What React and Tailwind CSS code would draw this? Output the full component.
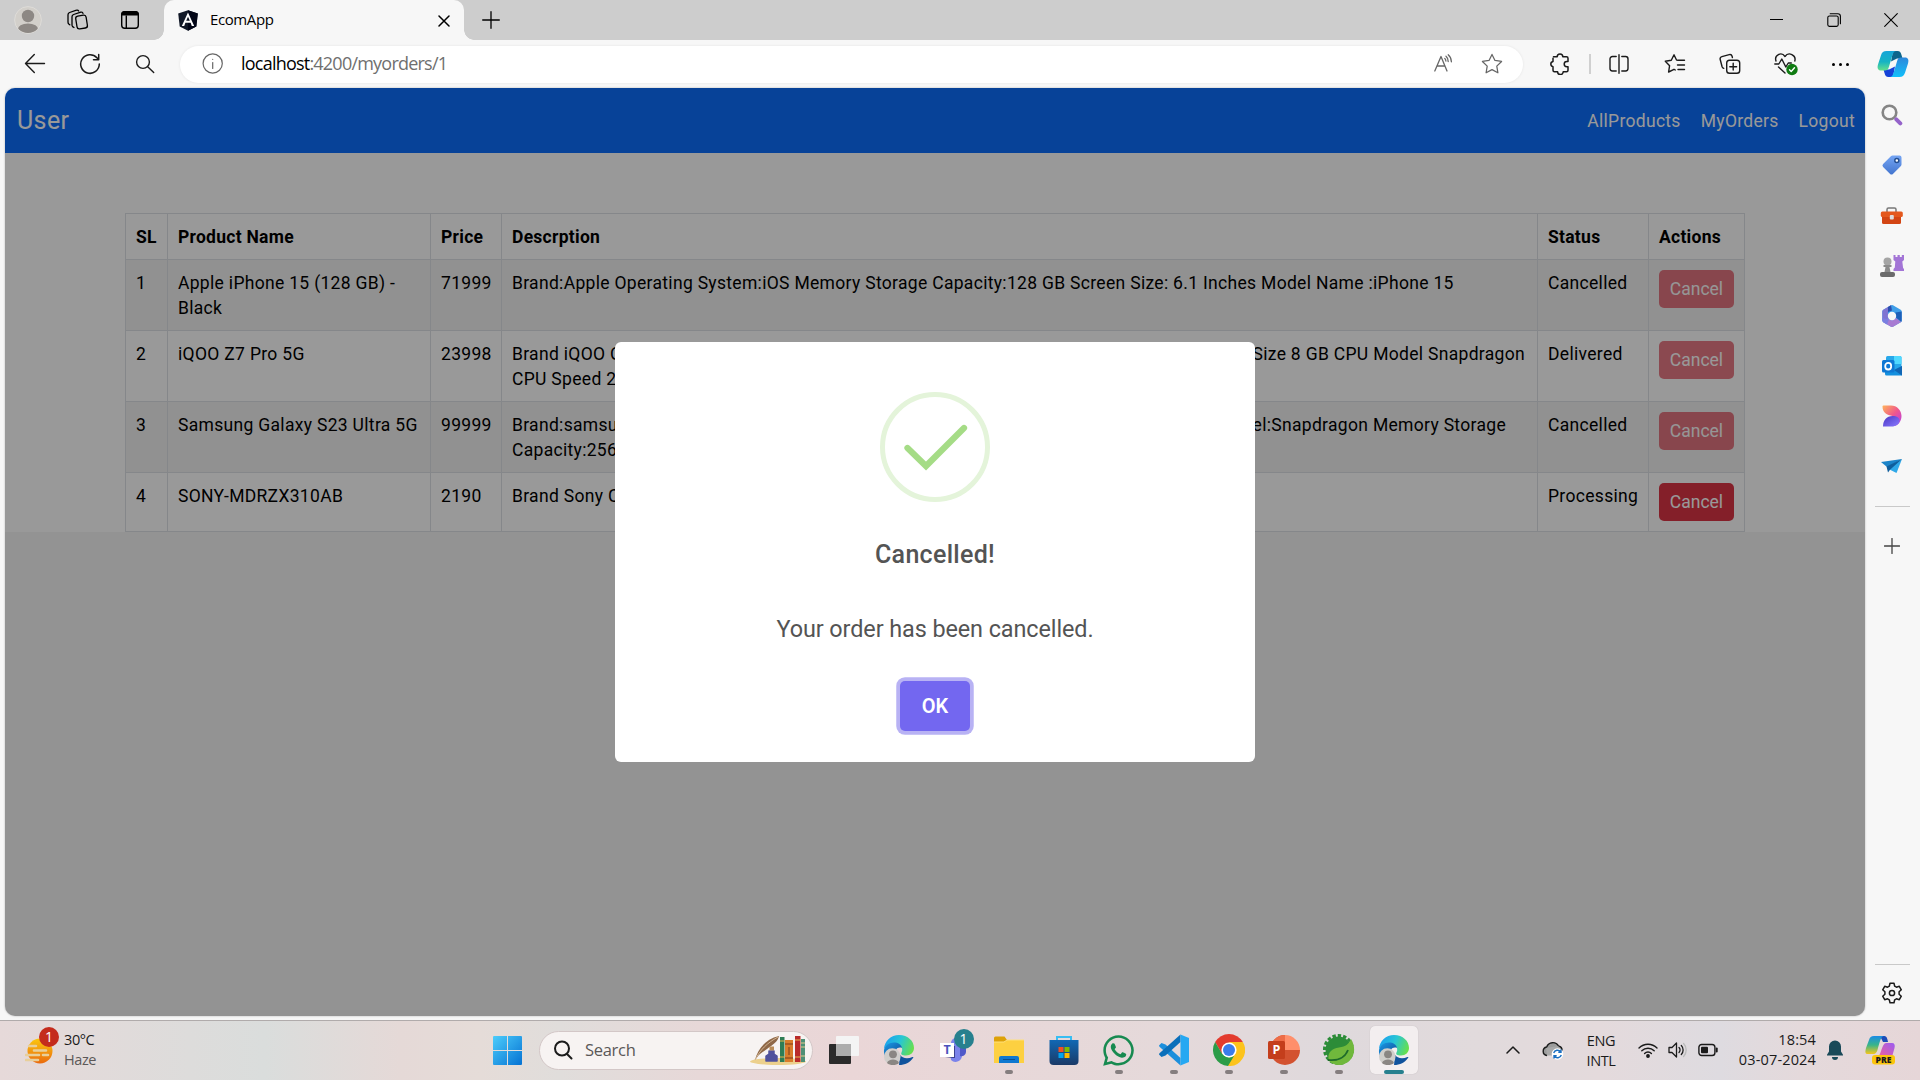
import { FaWhatsapp } from "react-icons/fa";

const UI = "font-['Open_Sans','Noto_Sans',sans-serif]";

function Icon({ s = 24, vb = "0 0 24 24", className = "", children, w = 1.3, ...rest }) {
  return (
    <svg width={s} height={s} viewBox={vb} className={"shrink-0 " + className} fill="none" stroke="currentColor" strokeWidth={w} strokeLinecap="round" strokeLinejoin="round" {...rest}>
      {children}
    </svg>
  );
}

function TabBar() {
  return (
    <div className="flex h-10 bg-[#cdcdcd] text-black">
      <div className="flex w-[164px] items-center">
        <div className="flex w-14 justify-center">
          <svg width="28" height="28" viewBox="0 0 28 28">
            <defs><clipPath id="av"><circle cx="14" cy="14" r="13" /></clipPath></defs>
            <circle cx="14" cy="14" r="13.4" fill="#d2cfca" stroke="#dedcd8" strokeWidth="1" />
            <g clipPath="url(#av)" fill="#8d8884"><circle cx="14" cy="10" r="6.2" /><ellipse cx="14" cy="24" rx="10.5" ry="6.6" /></g>
          </svg>
        </div>
        <div className="flex w-11 justify-center">
          <Icon s={24} w={1.3}>
            <rect x="10.3" y="7.6" width="10.5" height="13" rx="2.4" transform="rotate(-9 15 14)" />
            <path d="M8 19.5 6.6 18.6A2.5 2.5 0 0 1 6 16.600V8.800a2.500 2.500 0 0 1 1.600-2.300l7.200-2.400a1.800 1.800 0 0 1 2.200 1.300" />
            <path d="M3.800 16.800l-1-.8a2.500 2.500 0 0 1-.800-2V6.800a2.500 2.500 0 0 1 1.600-2.300L10.500 2.200a1.800 1.800 0 0 1 2.200.8" />
          </Icon>
        </div>
        <div className="flex w-[60px] justify-center">
          <Icon s={20} vb="0 0 20 20" w={1.4}>
            <rect x="1.700" y="1.700" width="16.600" height="16.600" rx="3" />
            <path d="M1.200 5.600V4.500A3.500 3.500 0 0 1 4.700 1h10.600a3.500 3.500 0 0 1 3.500 3.500v1.100z" fill="currentColor" stroke="none" />
            <path d="M6.300 6v12" />
          </Icon>
        </div>
      </div>
      <div className="relative flex w-[300px] items-center rounded-t-[10px] bg-[#f7f7f7] pl-[14px] pr-[12px]">
        <div className="absolute -left-[10px] bottom-0 size-[10px] bg-[radial-gradient(circle_at_0_0,#cdcdcd_9.500px,#f7f7f7_10px)]" />
        <div className="absolute -right-[10px] bottom-0 size-[10px] bg-[radial-gradient(circle_at_100%_0,#cdcdcd_9.500px,#f7f7f7_10px)]" />
        <svg width="20" height="21" viewBox="0 0 20 21">
          <path d="M10 .3 19.800 3.400 18.300 16.500 10 20.700 1.700 16.500 .2 3.400z" fill="#111827" />
          <path d="M10 .3 19.800 3.400 18.300 16.500 10 20.700z" fill="#020617" />
          <path fillRule="evenodd" d="M10 2.600 3.800 16h2.400l1.200-3.200h5.200L13.800 16h2.400zM10 6.700 11.800 10.800H8.200z" fill="#fff" />
        </svg>
        <span className={"mb-[2px] ml-[12px] text-[15px] leading-none tracking-[-0.4px] " + UI}>EcomApp</span>
        <Icon s={12} vb="0 0 12 12" w={1.500} className="ml-auto mr-[2px] mt-px"><path d="M1 1l10 10M11 1 1 11" /></Icon>
      </div>
      <div className="flex w-[53px] items-center justify-center pb-px"><Icon s={18} vb="0 0 18 18" w={1.300}><path d="M9 .7v16.600M.7 9h16.600" /></Icon></div>
      <div className="ml-auto flex items-center pb-px">
        <div className="flex w-[57px] justify-center"><div className="h-px w-[13px] bg-black" /></div>
        <div className="flex w-[57px] justify-center"><Icon s={14} vb="0 0 14 14" w={1.100}><rect x=".8" y="3" width="10.400" height="10.400" rx="1.600" /><path d="M3.200.7h7.600a2.600 2.600 0 0 1 2.600 2.600v7.400" /></Icon></div>
        <div className="flex w-[58px] justify-center"><Icon s={14} vb="0 0 14 14" w={1.100}><path d="M.7.7l12.600 12.600M13.300.7.7 13.300" /></Icon></div>
      </div>
    </div>
  );
}

function CopilotIcon() {
  return (
    <svg width="32" height="28" viewBox="0 0 32 28">
      <defs>
        <linearGradient id="cp1" x1="0" y1="0" x2="0" y2="1"><stop stopColor="#16a5d8" /><stop offset=".55" stopColor="#16b3c4" /><stop offset="1" stopColor="#63e08c" /></linearGradient>
        <linearGradient id="cp2" x1="0" y1="0" x2="0" y2="1"><stop stopColor="#2d87da" /><stop offset="1" stopColor="#11c0fb" /></linearGradient>
      </defs>
      <path d="M16 1h4.500c2.500 0 3.300 1.600 4 4l1 3.500h-5.500l-6 3z" fill="#0d668c" />
      <path d="M16 27h-4.500c-2.500 0-3.300-1.600-4-4l-1-3.500H12l6-3z" fill="#1542d8" />
      <path d="M9.500 1h10c-2.500 0-3.400 2-4.200 4.600l-3.500 11.600c-.7 2.300-1.600 3.300-4 3.300H4C.8 20.500 0 18 1 14.500L4 5.200C4.900 2.400 6.500 1 9.500 1z" fill="url(#cp1)" />
      <path d="M22.500 27h-10c2.500 0 3.400-2 4.200-4.600l3.500-11.600c.7-2.300 1.600-3.300 4-3.300H28c3.200 0 4 2.500 3 6l-3 9.300c-.9 2.800-2.500 4.200-5.500 4.200z" fill="url(#cp2)" />
    </svg>
  );
}

const star = "M10 1.300l2.700 5.500 6 .9-4.350 4.250 1 6L10 15.100l-5.350 2.850 1-6L1.300 7.700l6-.9z";

function Toolbar() {
  return (
    <div className="flex h-12 items-center bg-[#f7f7f7] text-[#1b1b1b]">
      <div className="flex w-[62px] justify-center pl-2"><Icon s={22} vb="0 0 22 22" w={1.400}><path d="M20.500 10.500H1.500M10.300 1.500 1.500 10.500l8.800 9" /></Icon></div>
      <div className="flex w-[56px] justify-center"><Icon s={22} vb="0 0 22 22" w={1.500}><path d="M20.300 11A9.300 9.300 0 1 1 17.900 4.800L19.500 6.500M19.700 1.500v5.200h-5.200" /></Icon></div>
      <div className="flex w-[54px] justify-center"><Icon s={20} vb="0 0 20 20" w={1.400}><circle cx="8" cy="8" r="6.400" /><path d="M12.700 12.700l6 5.800" /></Icon></div>
      <div className="ml-2 flex h-[37px] w-[1343px] items-center rounded-full bg-white shadow-[0_0_3px_rgba(0,0,0,0.08)]">
        <Icon s={22} vb="0 0 22 22" w={1.200} className="ml-[22px] text-[#666]"><circle cx="10.700" cy="10.500" r="9.600" /><path d="M10.700 9.500v6" /><circle cx="10.700" cy="6.300" r=".6" fill="currentColor" stroke="none" /></Icon>
        <span className={"mb-[2px] ml-[17px] text-[18px] leading-none tracking-[-0.78px] text-[#6f6f6f] " + UI}><span className="text-black">localhost</span>:4200/myorders/1</span>
        <div className="ml-auto flex items-center pr-[20px] text-[#666]">
          <Icon s={22} vb="0 0 22 22" w={1.300}><path d="M1.800 18 8 3.500 14 18M3.900 13h8.100M13 3.200c1.500 1.200 2.200 3 2.200 5.300M15.200 1.800c2.200 1.800 3.100 4 3.200 7M11.800 5.500c.8.600 1 1.500 1.100 2.500" /></Icon>
          <Icon s={22} vb="0 0 20 20" w={1.150} className="ml-[26px]"><path d={star} /></Icon>
        </div>
      </div>
      <div className="flex w-[66px] items-center justify-center pl-2"><Icon s={22} vb="0 0 22 22" w={1.500}><path d="M4.500 3.700h3.700a2.800 2.800 0 0 1 5.600 0h3.700a1.500 1.500 0 0 1 1.500 1.500v3.300h-1.200a2.600 2.600 0 0 0 0 5.200H19v3.600a1.500 1.500 0 0 1-1.500 1.500h-3.300a2.800 2.800 0 0 1-5.600 0H5.500A1.500 1.500 0 0 1 4 17.300v-3.600a2.700 2.700 0 0 1 0-5.300V5.200" /></Icon></div>
      <div className="h-5 w-[2px] bg-[#d0d0d0]" />
      <div className="flex w-[56px] justify-center"><Icon s={20} vb="0 0 20 20" w={1.400}><path d="M10 .7v18.600M7.200 2.500H3.400A2.400 2.400 0 0 0 1 4.900v9.700A2.400 2.400 0 0 0 3.400 17h3.800M12.800 2.500h3.800A2.400 2.400 0 0 1 19 4.900v9.700a2.400 2.400 0 0 1-2.400 2.400h-3.800" /></Icon></div>
      <div className="flex w-[56px] justify-center"><Icon s={22} vb="0 0 22 22" w={1.400}><path d="M12.500 7 10 1.800 7.300 7.200 1.300 8.200l4.300 4.500-1 6.300L10 16.300l1.300.7M13.500 7.300h7M13.500 12h7M14 16.500h6.500" /></Icon></div>
      <div className="flex w-[54px] justify-center"><Icon s={22} vb="0 0 22 22" w={1.400}><rect x="7.700" y="7.200" width="13" height="13" rx="2.800" /><path d="M14.200 10.300v6.800M10.800 13.700h6.800M4.700 15.300a2.400 2.400 0 0 1-1.600-1.600L1.200 6.500a2.400 2.400 0 0 1 1.700-2.900l7.300-2a2.400 2.400 0 0 1 2.900 1.700l.3 1.200" /></Icon></div>
      <div className="flex w-[57px] justify-center">
        <Icon s={26} vb="0 0 26 26" w={1.400}>
          <path d="M3 10c-2-6 5.500-9.700 9-4.500C15.500.3 23.500 4 21.800 10M1.800 13h4l3-5 4 8 2.500-4h3M5.500 16l6.500 6" />
          <circle cx="19" cy="18.500" r="5.700" fill="#0f7b12" stroke="none" /><path d="M16.500 18.800l1.700 1.700 3.300-3.700" stroke="#fff" />
        </Icon>
      </div>
      <div className="flex w-[52px] justify-center gap-[4px]"><i className="size-[3px] rounded-full bg-black" /><i className="size-[3px] rounded-full bg-black" /><i className="size-[3px] rounded-full bg-black" /></div>
      <div className="flex w-[54px] justify-center"><CopilotIcon /></div>
    </div>
  );
}

const rows = [
  { sl: 1, name: "Apple iPhone 15 (128 GB) - Black", price: 71999, lines: [["Brand:Apple Operating System:iOS Memory Storage Capacity:128 GB Screen Size: 6.1 Inches Model Name :iPhone 15"]], status: "Cancelled" },
  { sl: 2, name: "iQOO Z7 Pro 5G", price: 23998, lines: [["Brand iQOO Operating", "Size 8 GB CPU Model Snapdragon", "pr-[2px]"], ["CPU Speed 2"]], status: "Delivered" },
  { sl: 3, name: "Samsung Galaxy S23 Ultra 5G", price: 99999, lines: [["Brand:samsung", "Model:Snapdragon Memory Storage", "pr-[21px]"], ["Capacity:256"]], status: "Cancelled" },
  { sl: 4, name: "SONY-MDRZX310AB", price: 2190, lines: [["Brand Sony Color"]], status: "Processing" },
];

const cell = "border border-[#dee2e6] px-[10px] pt-[11px] pb-[9px] text-left align-top";

function Orders() {
  return (
    <div className="h-[379px] bg-white pt-[60px] pl-[120px]">
      <table className="w-[1620px] table-fixed border-collapse text-[17.500px] leading-[25px] tracking-[0.3125px] text-black">
        <colgroup>
          <col className="w-[42px]" /><col className="w-[263px]" /><col className="w-[71px]" /><col className="w-[1036px]" /><col className="w-[111px]" /><col className="w-[96px]" />
        </colgroup>
        <thead>
          <tr className="h-[46px]">
            {["SL", "Product Name", "Price", "Descrption", "Status", "Actions"].map((h) => (
              <th key={h} className={cell + " font-bold tracking-[0.27px] whitespace-nowrap"}>{h}</th>
            ))}
          </tr>
        </thead>
        <tbody>
          {rows.map((r) => (
            <tr key={r.sl} className="odd:bg-[#f2f2f2]">
              <td className={cell}>{r.sl}</td>
              <td className={cell}>{r.name}</td>
              <td className={cell}>{r.price}</td>
              <td className={cell}>
                {r.lines.map(([a, b, pad], i) => (
                  <div key={i} className={"flex justify-between whitespace-nowrap " + (pad || "")}><span>{a}</span>{b && <span>{b}</span>}</div>
                ))}
              </td>
              <td className={cell}>{r.status}</td>
              <td className="border border-[#dee2e6] p-[10px] align-top">
                <button className={"block h-[38px] w-[75px] rounded-[5px] bg-[#dc3545] text-[17.500px] leading-[26px] tracking-normal text-white " + (r.status === "Processing" ? "" : "opacity-65")}>Cancel</button>
              </td>
            </tr>
          ))}
        </tbody>
      </table>
    </div>
  );
}

function Modal() {
  return (
    <div className="absolute inset-0 flex items-center justify-center bg-black/40">
      <div className="flex h-[420px] w-[640px] flex-col items-center rounded-[6px] bg-white pt-[50px] text-[#545454]">
        <svg width="110" height="110" viewBox="0 0 110 110" className="shrink-0" fill="none">
          <circle cx="55" cy="55" r="52.500" stroke="#e4f4da" strokeWidth="5" />
          <path d="M27.500 56 46 74 84 36" stroke="#a5dc86" strokeWidth="6.250" strokeLinecap="round" />
        </svg>
        <h2 className="mt-[33px] text-[25px] leading-[40px] font-medium tracking-[0.3px]">Cancelled!</h2>
        <p className="mt-[37px] text-[23.400px] leading-[34px] tracking-[-0.080px]">Your order has been cancelled.</p>
        <button className="mt-[35px] h-[50px] w-[70px] shrink-0 rounded-[5px] bg-[#7367f0] text-[20px] font-semibold text-white shadow-[0_0_0_3.750px_#b8b2f4]">OK</button>
      </div>
    </div>
  );
}

function Sidebar() {
  const c = "flex h-[50.200px] items-center justify-center";
  return (
    <div className="flex w-[55px] flex-col items-stretch pt-[2px] pr-px text-[#1b1b1b]">
      <div className={c}>
        <svg width="22" height="22" viewBox="0 0 22 22" fill="none"><circle cx="8.500" cy="8.500" r="6.800" stroke="#858585" strokeWidth="2.600" /><path d="M15.300 15.300l4 4" stroke="#9563ca" strokeWidth="4" strokeLinecap="round" /></svg>
      </div>
      <div className={c}>
        <svg width="22" height="22" viewBox="0 0 22 22"><defs><linearGradient id="tg" x1="0" y1="0" x2="0" y2="1"><stop stopColor="#75a5f3" /><stop offset="1" stopColor="#4375cf" /></linearGradient></defs><path d="M11.500 1.500h7A2 2 0 0 1 20.500 3.500v7a2 2 0 0 1-.6 1.400l-8 8a2 2 0 0 1-2.800 0l-7-7a2 2 0 0 1 0-2.800l8-8a2 2 0 0 1 1.400-.6z" fill="url(#tg)" /><circle cx="15.800" cy="6.500" r="2" fill="#fff" stroke="#234e91" strokeWidth="1.500" /></svg>
      </div>
      <div className={c + " pt-[2px]"}>
        <svg width="24" height="22" viewBox="0 0 24 22"><path d="M7 7V4.500A1.500 1.500 0 0 1 8.500 3h6A1.500 1.500 0 0 1 16 4.500V7" fill="none" stroke="#777" strokeWidth="1.500" /><rect x="2" y="10" width="19" height="9" rx="1.500" fill="#d34513" /><rect x=".8" y="6.500" width="22" height="5.500" rx="1.500" fill="#e4581d" /><rect x="9.800" y="10" width="4" height="4.500" rx="1" fill="#ddd" /></svg>
      </div>
      <div className={c}>
        <svg width="24" height="24" viewBox="0 0 24 24"><path d="M13.500 1h2v2h2V1h2.300v2h2V1H24v5l-1.700 1.500.8 6.500.9 1v2H13.500v-2l1.300-1.500.5-6L13.500 6z" fill="#a375d6" /><circle cx="7.500" cy="7.500" r="4" fill="#a5a5a5" /><path d="M3.500 11h8v2h-2l1 5h-6l1-5h-2z" fill="#8b8b8b" /><rect x="0" y="18" width="15" height="5" rx="2" fill="#6b6b6b" /></svg>
      </div>
      <div className={c}>
        <svg width="22" height="24" viewBox="0 0 22 24">
          <path d="M10 1.200a2 2 0 0 1 2 0l7.700 4.500a2 2 0 0 1 1 1.700v9.200a2 2 0 0 1-1 1.700L12 22.800a2 2 0 0 1-2 0l-7.700-4.500a2 2 0 0 1-1-1.700V7.400a2 2 0 0 1 1-1.700z" fill="#3f9ee8" />
          <path d="M10 1.200 2.300 5.700a2 2 0 0 0-1 1.700v9.200l5.700-1V8z" fill="#7f74d2" /><path d="M10 1.200 7 3v5l4-1.500z" fill="#2b4fae" />
          <path d="M20.700 7.400v9.200a2 2 0 0 1-.5 1.300L14.500 13V8.500z" fill="#1d5fb8" />
          <path d="M20.200 17.900 12 22.800a2 2 0 0 1-2 0L2 18l5-3.500 4 2 4-2.500z" fill="#a87bd2" /><path d="M1.300 14v2.600a2 2 0 0 0 1 1.700L6 20.500l2-5z" fill="#7a7fe0" />
          <circle cx="11" cy="12" r="4.200" fill="#f7f7f7" />
        </svg>
      </div>
      <div className={c}>
        <svg width="22" height="22" viewBox="0 0 22 22"><rect x="5" y="1" width="15.500" height="15" rx="1.500" fill="#28a8ea" /><path d="M13 1h6a1.500 1.500 0 0 1 1.500 1.500V9H13z" fill="#50d9ff" /><path d="M4 12l9 3 8-4v9.500H5.500A1.500 1.500 0 0 1 4 19z" fill="#1490df" /><path d="M21 11v9.500L13 15z" fill="#1066b5" /><rect x="1" y="5" width="12.500" height="12.500" rx="1.500" fill="#0f78d4" /><ellipse cx="7.200" cy="11.200" rx="3" ry="3.300" fill="none" stroke="#fff" strokeWidth="1.800" /></svg>
      </div>
      <div className={c}>
        <svg width="22" height="24" viewBox="0 0 22 24"><defs><linearGradient id="ds1" x1="0" y1="0" x2="1" y2="1"><stop stopColor="#ffb35a" /><stop offset=".5" stopColor="#f0588b" /><stop offset="1" stopColor="#b339ef" /></linearGradient><linearGradient id="ds2" x1="0" y1="0" x2="1" y2="1"><stop stopColor="#4a36c4" /><stop offset="1" stopColor="#8a7bff" /></linearGradient></defs><path d="M2.500 1.500h7.500c6 0 10.500 5 10.500 10.500 0 5-3 9-7 10C16 18 15 13 11.500 12 6 11 1.500 9 1.500 2.500a1 1 0 0 1 1-1z" fill="url(#ds1)" /><path d="M2 22.500c0-6 3.500-10.500 9.500-10.500 4.500 0 7 2 7 4.500 0 3.500-3.500 6-8 6z" fill="url(#ds2)" /></svg>
      </div>
      <div className={c}>
        <svg width="24" height="22" viewBox="0 0 24 22"><path d="M1 7 22 4l-9.500 5.500L7 12z" fill="#1c84c9" /><path d="M22 4 7.500 13.500 16.500 18z" fill="#2fa8e8" /><path d="M22 4 6.500 11.500 8 17.500l2-2.800z" fill="#0f5e9c" /></svg>
      </div>
      <div className="mx-auto mt-[14px] h-px w-[35px] bg-[#c9c9c9]" />
      <div className="mt-[14px] flex h-[50px] items-center justify-center"><Icon s={16} vb="0 0 16 16" w={1.300} className="text-[#444]"><path d="M8 .5v15M.5 8h15" /></Icon></div>
      <div className="mx-auto mt-auto h-px w-[35px] bg-[#c9c9c9]" />
      <div className="flex h-[51px] items-center justify-center pt-[4px]">
        <Icon s={22} vb="0 0 22 22" w={1.500}><path d="M9 1.300h4l.7 2.900 1.700 1 2.900-.9 2 3.500-2.200 2v2.400l2.200 2-2 3.500-2.900-.9-1.700 1-.7 2.900H9l-.7-2.900-1.700-1-2.900.9-2-3.500 2.200-2V9.800l-2.200-2 2-3.500 2.900.9 1.700-1z" /><circle cx="11" cy="11" r="2.600" /></Icon>
      </div>
    </div>
  );
}

function EdgeLogo({ id }) {
  return (
    <svg width="32" height="32" viewBox="0 0 32 32">
      <defs>
        <linearGradient id={id + "a"} x1="0" y1=".3" x2="1" y2=".6"><stop stopColor="#1a9ff0" /><stop offset=".5" stopColor="#28c6d4" /><stop offset="1" stopColor="#68e04a" /></linearGradient>
        <linearGradient id={id + "b"} x1="0" y1="0" x2="1" y2="1"><stop stopColor="#1b9be8" /><stop offset="1" stopColor="#0d4a93" /></linearGradient>
      </defs>
      <path d="M1 15C1.500 7 8 1 16 1c9 0 15 6 15 13 0 4.500-3.500 7.500-8 7.500-4 0-5.500-1.300-4.500-3 1.500-3 .5-5-1-6.500-5-4.500-13-2.500-16.500 3z" fill={"url(#" + id + "a)"} />
      <path d="M1 16C2 11.500 6 8.500 11 8.500c4 0 7.500 2 8 5.500-2-1-5-.5-6 2l-2 4-9 2C1.200 20 .8 18 1 16z" fill={"url(#" + id + "b)"} />
      <path d="M17 21c2 3 7 4.500 12.500 2 1-.4 1 .3.500 1-3 4.500-8 7-14 7z" fill="#10539d" />
      <circle cx="9.300" cy="22.500" r="8.300" fill="#d0cecb" /><circle cx="10" cy="20.300" r="3.900" fill="#8a8683" /><path d="M4 29c1-4.800 11-4.800 12 0-3 2.700-9 2.700-12 0z" fill="#8a8683" />
    </svg>
  );
}

const tasks = [
  { run: "", icon: <svg width="32" height="30" viewBox="0 0 32 30"><rect x="1" y="9" width="22" height="20" rx="1" fill="#2b2b2b" /><rect x="8" y="1" width="23" height="20" rx="1" fill="#f4f4f4" /><path d="M8 9h15v12H9a1 1 0 0 1-1-1z" fill="#adadad" /></svg> },
  { run: "", icon: <EdgeLogo id="e1" /> },
  { run: "", icon: (
    <div className="relative">
      <svg width="34" height="32" viewBox="0 0 34 32"><circle cx="19" cy="9" r="5" fill="#7b83eb" /><path d="M12 11h13v10a6.500 6.500 0 0 1-11 5z" fill="#7b83eb" /><path d="M23 12h6v6a4.500 4.500 0 0 1-6 4z" fill="#5059c9" /><path d="M16 12h2v12H8l8-1z" fill="#3c4291" /><rect x="3" y="9" width="14" height="14" fill="#fff" /><text x="10" y="20.300" textAnchor="middle" fontFamily="Open Sans" fontWeight="700" fontSize="12.500" fill="#4b53bc">T</text></svg>
      <span className="absolute -top-[5px] left-[17px] flex size-5 items-center justify-center rounded-full bg-[#27808e] font-['Open_Sans',sans-serif] text-[14px] leading-none text-white">1</span>
    </div>) },
  { run: "dot", icon: <svg width="32" height="30" viewBox="0 0 32 30"><path d="M1 3a1.500 1.500 0 0 1 1.500-1.500h9L14 5h17v6H1z" fill="#dda108" /><path d="M1 7h10l3-2h17v23H1z" fill="#fdd041" /><path d="M1 7h10l3-2h17" stroke="#ffe07a" fill="none" /><path d="M6 28v-5a2 2 0 0 1 2-2h16a2 2 0 0 1 2 2v5z" fill="#0f78d0" /><path d="M10 24.500h12" stroke="#0a4f91" /></svg> },
  { run: "", icon: <svg width="32" height="32" viewBox="0 0 32 32"><defs><linearGradient id="st" x1="0" y1="0" x2="0" y2="1"><stop stopColor="#1168b4" /><stop offset="1" stopColor="#1a3a67" /></linearGradient></defs><path d="M9 7V3h14v4" fill="none" stroke="#38bdf2" strokeWidth="2" /><path d="M1.500 6h29v21a4 4 0 0 1-4 4h-21a4 4 0 0 1-4-4z" fill="url(#st)" /><path d="M10.500 13h5v5h-5z" fill="#f25022" /><path d="M16.500 13h5v5h-5z" fill="#7fba00" /><path d="M10.500 19h5v5h-5z" fill="#00a4ef" /><path d="M16.500 19h5v5h-5z" fill="#ffb900" /></svg> },
  { run: "dot", icon: <FaWhatsapp size={35} color="#178a50" /> },
  { run: "dot", icon: <svg width="32" height="32" viewBox="0 0 32 32"><path d="M1 11.500 3.500 9l4 1.500L22.500 24v7.500L1.500 12.800z" fill="#1c8fdc" /><path d="M1 20.500 3.500 23l4-1.500L22.500 8V.5L1.500 19.200z" fill="#0a6fba" /><path d="M22.500.5 31 4v24l-8.500 3.500z" fill="#26a8f2" /></svg> },
  { run: "dot", icon: <svg width="32" height="32" viewBox="0 0 32 32"><path d="M16 16 2.150 8A16 16 0 0 1 29.850 8z" fill="#e33b2e" /><path d="M16 16 29.850 8A16 16 0 0 1 15 32z" fill="#fcc31c" /><path d="M16 8h13.850L22 20z" fill="#fcc31c" /><path d="M2.150 8 9 20l7-12z" fill="#e33b2e" /><path d="M2.150 8 9.200 20 16 23.500 21 22 15 32A16 16 0 0 1 2.150 8z" fill="#2b9c48" /><circle cx="16" cy="16" r="7.600" fill="#fff" /><circle cx="16" cy="16" r="6" fill="#3a7cec" /></svg> },
  { run: "dot", icon: <svg width="32" height="30" viewBox="0 0 32 30"><path d="M17 0a15 15 0 0 1 15 15H17z" fill="#ff8f6b" /><path d="M17 0v15h15a15 15 0 1 1-15-15z" fill="#d35230" /><path d="M17 0v15H2A15 15 0 0 1 17 0z" fill="#ed6c47" /><rect x="0" y="6" width="17" height="18" rx="1.500" fill="#c43e1c" /><text x="8.500" y="19.300" textAnchor="middle" fontFamily="Open Sans" fontWeight="700" fontSize="12.500" fill="#fff">P</text></svg> },
  { run: "dot", icon: <svg width="32" height="32" viewBox="0 0 32 32"><circle cx="15.500" cy="15.500" r="13" fill="#2c8c38" /><circle cx="15.500" cy="15.500" r="14" fill="none" stroke="#2c8c38" strokeWidth="3" strokeDasharray="3.400 2" /><path d="M28 5c5 8 4 18-3 23-6 4.500-14 4-19-1-2-7 1-12 10-13.500 7-1 10-3.500 12-8.500z" fill="#70b83c" /><path d="M5 26c9 1 17-2 20-10" stroke="#1e6b2a" strokeWidth="1.800" fill="none" /></svg> },
  { run: "active", icon: <EdgeLogo id="e2" /> },
];

function SearchArt() {
  return (
    <svg width="58" height="32" viewBox="0 0 58 32">
      <ellipse cx="29" cy="27.500" rx="28" ry="3.500" fill="#ecd08c" />
      <path d="M6 26C9 14 17 5 30 2c-1 6-7 9-12 13-3 2-7 5-9 7z" fill="#8f6848" /><path d="M6 26C11 16 18 9 29 3" stroke="#d2b492" fill="none" />
      <path d="M20 17h5v3l3 2v5h-11v-5l3-2z" fill="#50519c" stroke="#50519c" strokeWidth="1.500" strokeLinejoin="round" /><path d="M20.500 12.500h4.500v4h-4.500z" fill="#b98b57" />
      <path d="M31 3h4.500v25H31z" fill="#2e7d55" /><path d="M31 7h4.500M31 23h4.500" stroke="#e2b34c" /><path d="M36 6h8v22h-8z" fill="#d97c2b" /><path d="M36 10h8M36 24h8M40 13v8" stroke="#7c3a18" /><path d="M46 2h5.500v26H46z" fill="#b92a2a" /><path d="M46 6h5.500M46 23h5.500" stroke="#e7b44f" /><path d="M52 5h4v23h-4z" fill="#4e8f76" /><path d="M52 9h4M52 13h4M52 22h4" stroke="#e2c98a" />
    </svg>
  );
}

function Taskbar() {
  return (
    <div className={"flex h-[60px] items-center border-t border-[#b0abab] bg-[linear-gradient(90deg,#e6d9d9_0px,#dddcdb_190px,#dadddc_265px,#e5d9d7_400px,#e5dcd8_480px,#e0dddb_560px,#e7d8d8_700px,#ead6d7_850px,#e5d9da_1160px,#dfd9dc_1330px,#e1dadc_1480px,#e4dadc_1600px,#dedbe0_1720px,#e4d9db_1800px,#e6d6d8_1920px)] pb-px text-[#1b1b1b] " + UI}>
      <div className="flex w-[480px] items-center pl-[25px]">
        <div className="relative">
          <svg width="30" height="36" viewBox="0 0 30 36"><defs><linearGradient id="sun" x1="0" y1="0" x2="0" y2="1"><stop stopColor="#fbc70f" /><stop offset="1" stopColor="#ea6a0e" /></linearGradient></defs><circle cx="15" cy="19" r="12.500" fill="url(#sun)" /><path d="M4 14h7M9 18.500h12M1 23h13M18 23h5M1 28h12" stroke="#e8cf9a" strokeWidth="2.600" strokeLinecap="round" /></svg>
          <span className="absolute -top-[5px] left-[14px] flex size-5 items-center justify-center rounded-full bg-[#c42b1c] text-[14px] leading-none text-white">1</span>
        </div>
        <div className="ml-[9px] text-[14.500px] leading-[20px] tracking-[-0.4px]"><div>30°C</div><div className="text-[#5c5858]">Haze</div></div>
      </div>
      <div className="flex w-[55px] justify-center">
        <svg width="29" height="29" viewBox="0 0 29 29"><defs><linearGradient id="wn" gradientUnits="userSpaceOnUse" x1="0" y1="0" x2="29" y2="29"><stop stopColor="#4ccdfb" /><stop offset="1" stopColor="#0572d3" /></linearGradient></defs><path d="M0 1a1 1 0 0 1 1-1h13v14H0zM15 0h13a1 1 0 0 1 1 1v13H15zM0 15h14v14H1a1 1 0 0 1-1-1zM15 15h14v13a1 1 0 0 1-1 1H15z" fill="url(#wn)" /></svg>
      </div>
      <div className="ml-[4px] flex h-[39px] w-[274px] items-center rounded-full border border-[#d3c7c7] bg-[#f7f3f2] pr-[5px] pl-[13px]">
        <Icon s={20} vb="0 0 20 20" w={2}><circle cx="9" cy="8.500" r="7" /><path d="M14 14l4.500 4.500" /></Icon>
        <span className="ml-[12px] text-[16.500px] leading-none tracking-[-0.3px] text-[#5b5858]">Search</span>
        <span className="ml-auto"><SearchArt /></span>
      </div>
      <div className="ml-[3px] flex">
        {tasks.map((t, i) => (
          <div key={i} className="flex w-[55px] justify-center">
            <div className={"relative flex size-12 items-center justify-center rounded-[5px] " + (t.run === "active" ? "bg-[#f3eeef] shadow-[0_0_1px_rgba(0,0,0,0.2)]" : "")}>
              {t.icon}
              {t.run === "dot" && <span className="absolute bottom-0 h-1 w-2 rounded-full bg-[#857e7f]" />}
              {t.run === "active" && <span className="absolute bottom-0 h-1 w-5 rounded-full bg-[#27808e]" />}
            </div>
          </div>
        ))}
      </div>
      <div className="ml-auto flex items-center">
        <div className="flex w-[36px] justify-center"><Icon s={14} vb="0 0 14 8" w={1.500}><path d="M1 7l6-6 6 6" /></Icon></div>
        <div className="flex w-[44px] justify-center">
          <svg width="22" height="20" viewBox="0 0 22 20"><path d="M5 15.500a4.300 4.300 0 0 1-.3-8.500A6.500 6.500 0 0 1 16.500 6a4.300 4.300 0 0 1 3.500 4.500" fill="#9b9b9b" stroke="#1b1b1b" strokeWidth="1.400" /><path d="M5 15.500h7l8-5L16 6 4 8z" fill="#a9a9a9" /><circle cx="15.500" cy="14" r="5.800" fill="#fff" /><path d="M11.700 13a4 4 0 0 1 7-1.200M19.300 15a4 4 0 0 1-7 1.200M19 9.500v2.700h-2.700M12 18.500v-2.700h2.700" stroke="#1a6fc2" strokeWidth="1.400" fill="none" /></svg>
        </div>
        <div className="w-[52px] pt-px text-center text-[14.500px] leading-[20px] tracking-[-0.4px]">ENG<br />INTL</div>
        <div className="flex w-[40px] justify-center pl-px"><Icon s={20} vb="0 0 20 16" w={1.400}><path d="M1 6a12.700 12.700 0 0 1 18 0M3.800 8.800a8.800 8.800 0 0 1 12.400 0M6.600 11.400a4.800 4.800 0 0 1 6.800 0" /><circle cx="10" cy="14" r="1.200" fill="currentColor" /></Icon></div>
        <div className="flex w-[22px] justify-center"><Icon s={20} vb="0 0 20 20" w={1.300}><path d="M1 7.500h3L8.500 3v14L4 12.500H1zM11 7.500a3.500 3.500 0 0 1 0 5M13.300 5.500a6.500 6.500 0 0 1 0 9" /><path d="M15.600 3.500a9.500 9.500 0 0 1 0 13" stroke="#bbb" /></Icon></div>
        <div className="flex w-[36px] justify-center pl-px"><Icon s={20} vb="0 0 20 14" w={1.400}><rect x=".9" y="1.500" width="16" height="11" rx="2.800" /><rect x="3" y="3.700" width="7" height="6.600" rx="1" fill="currentColor" stroke="none" /><path d="M18.700 5.500v3" strokeWidth="2" /></Icon></div>
        <div className="w-[91px] text-right text-[14.500px] leading-[20px] tracking-[0.15px]">18:54<br />03-07-2024</div>
        <div className="flex w-[38px] justify-center"><svg width="16" height="20" viewBox="0 0 16 20"><path d="M8 .5a6 6 0 0 1 6 6v5l2 3.300v.7H0v-.7l2-3.300v-5a6 6 0 0 1 6-6z" fill="#1a4a59" /><path d="M5 17h6a3 3 0 0 1-6 0z" fill="#1a4a59" /></svg></div>
        <div className="flex w-[66px] justify-center pr-[12px]">
          <svg width="32" height="30" viewBox="0 0 32 30" className="shrink-0">
            <defs><linearGradient id="pr1" x1="0" y1="0" x2="0" y2="1"><stop stopColor="#1a8be5" /><stop offset=".5" stopColor="#38b58a" /><stop offset="1" stopColor="#f6c61c" /></linearGradient><linearGradient id="pr2" x1="1" y1="0" x2="0" y2="1"><stop stopColor="#9a5cf2" /><stop offset="1" stopColor="#f0609a" /></linearGradient></defs>
            <path d="M15 1h4.500c2 0 2.800 2 3.500 6h-5z" fill="#1b4cb8" /><path d="M9 1h10c-3 0-4 5-6 12-1 4-2 6-5 6H3c-3 0-3-2-2-6l3-8c1-3 2-4 5-4z" fill="url(#pr1)" /><path d="M13 22c3-2 4-14 8-14h6c2.500 0 3.300 2 2.500 5L27 22z" fill="url(#pr2)" />
            <rect x="7" y="20" width="23" height="9.500" rx="3" fill="#fbc50c" /><text x="18.500" y="27.700" textAnchor="middle" fontSize="8.500" fontWeight="800" fontFamily="Open Sans" fill="#1b1b1b">PRE</text>
          </svg>
        </div>
      </div>
    </div>
  );
}

export default function App() {
  return (
    <div className="h-[1080px] w-[1920px] overflow-hidden bg-[#f7f7f7] font-[Roboto,sans-serif]">
      <TabBar />
      <Toolbar />
      <div className="flex h-[932px] bg-[#f7f7f7] pb-[4px] pl-[5px]">
        <div className="relative w-[1860px] overflow-hidden rounded-[10px] bg-[#f5f5f5] shadow-[0_0_2px_rgba(0,0,0,0.3)]">
          <nav className="flex h-[65px] items-center bg-[#0d6efd] pt-px pr-[10px] pl-[12px] text-white">
            <span className="text-[25px] tracking-[0.4px]">User</span>
            <div className="ml-auto flex gap-[20px] pt-px text-[17.500px] tracking-[0.3px]"><a>AllProducts</a><a>MyOrders</a><a>Logout</a></div>
          </nav>
          <Orders />
          <Modal />
        </div>
        <Sidebar />
      </div>
      <Taskbar />
    </div>
  );
}
